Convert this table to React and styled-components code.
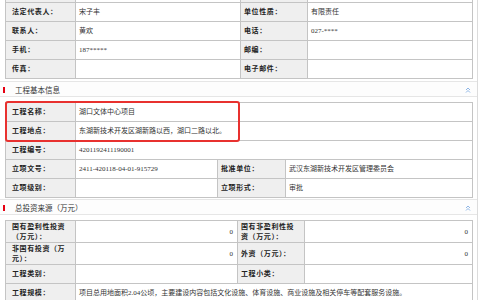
import React from 'react'
import styled, { createGlobalStyle } from 'styled-components'

const GlobalStyle = createGlobalStyle`
  html, body {
    margin: 0;
    padding: 0;
    background: #fff;
    overflow: hidden;
  }
  body {
    font-family: "Liberation Serif", "Noto Sans CJK SC", serif;
    color: #333;
  }
`

// column widths of each form table (label | value | label | value)
const companyCols = '70px 165px 67px 165px'
const projectCols = '70px 142px 68px 187px'
const fundCols = '70px 162px 67px 168px'

// first row sits above the window, only its bottom edge shows
const ownerRows = [
  ['', '', '', ''],
  ['法定代表人：', '宋子丰', '单位性质：', '有限责任'],
  ['联系人：', '黄欢', '电话：', '027-****'],
  ['手机：', '187*****', '邮编：', ''],
  ['传真：', '', '电子邮件：', ''],
]

const Panel = styled.div`
  width: 477px;
  height: 317px;
  margin-top: -17px;
  border-right: 1px solid #dcdcdc;
  overflow: hidden;
`

const Grid = styled.div`
  position: relative;
  display: grid;
  grid-template-columns: ${(p) => p.$cols};
  width: 468px;
  margin-left: 5px;
  border-top: 1px solid #c4c4c4;
  border-left: 1px solid #c4c4c4;
  box-sizing: border-box;
`

const Cell = styled.div`
  display: flex;
  align-items: center;
  justify-content: ${(p) => (p.$num ? 'flex-end' : 'flex-start')};
  min-height: 18px;
  padding: ${(p) => (p.$tall ? '1px' : '0')} 4px 0 ${(p) => (p.$inset ? '6px' : '3px')};
  border-right: 1px solid #c4c4c4;
  border-bottom: 1px solid #c4c4c4;
  grid-column: ${(p) => (p.$span ? `span ${p.$span}` : 'auto')};
  font-size: 7px;
  line-height: 10px;
  white-space: ${(p) => (p.$tall ? 'normal' : 'nowrap')};
`

const Label = styled(Cell)`
  background: #efefef;
  color: #222;
  font-weight: 700;
  letter-spacing: 0.6px;
  padding-right: ${(p) => (p.$tall ? '9px' : '4px')};
`

const Value = styled(Cell)`
  background: #fff;
  color: #333;
`

const SectionHead = styled.div`
  display: flex;
  align-items: center;
  height: 14px;
  margin: ${(p) => p.$gap || '2px'} 0 5px;
  padding: 0 6px 0 3px;
  border-top: 1px solid #e6e6e6;
  border-bottom: 1px solid #e6e6e6;
  background: #fdfdfd;
  font-size: 7.5px;
  color: #333;
`

const Marker = styled.span`
  width: 2px;
  height: 6px;
  margin: 2px 10px 0 0;
  background: #e60012;
`

const HeadTitle = styled.span`
  flex: 1;
  padding-top: 1px;
`

const Collapse = styled.svg`
  width: 6px;
  height: 6px;
  margin-top: 1px;
`

const Highlight = styled.div`
  position: absolute;
  top: -2px;
  left: -1px;
  width: 235px;
  height: 41px;
  border: 2px solid #e8312f;
  border-radius: 3px;
  box-sizing: border-box;
  pointer-events: none;
`

const UpIcon = () => (
  <Collapse viewBox="0 0 6 6">
    <path d="M1 3 L3 1 L5 3 M1 5.5 L3 3.5 L5 5.5" fill="none" stroke="#8fb6e6" strokeWidth="1" />
  </Collapse>
)

const Section = ({ title, gap }) => (
  <SectionHead $gap={gap}>
    <Marker />
    <HeadTitle>{title}</HeadTitle>
    <UpIcon />
  </SectionHead>
)

const App = () => {
  return (
    <>
      <GlobalStyle />
      <Panel>
        <Grid $cols={companyCols}>
          {ownerRows.map((row, i) => (
            <React.Fragment key={i}>
              <Label $inset>{row[0]}</Label>
              <Value>{row[1]}</Value>
              <Label>{row[2]}</Label>
              <Value>{row[3]}</Value>
            </React.Fragment>
          ))}
        </Grid>

        <Section title="工程基本信息" />

        <Grid $cols={projectCols}>
          <Label $inset>工程名称：</Label>
          <Value $span={3}>湖口文体中心项目</Value>
          <Label $inset>工程地点：</Label>
          <Value $span={3}>东湖新技术开发区湖新路以西，湖口二路以北。</Value>
          <Label $inset>工程编号：</Label>
          <Value $span={3}>4201192411190001</Value>
          <Label $inset>立项文号：</Label>
          <Value>2411-420118-04-01-915729</Value>
          <Label>批准单位：</Label>
          <Value>武汉东湖新技术开发区管理委员会</Value>
          <Label $inset>立项级别：</Label>
          <Value></Value>
          <Label>立项形式：</Label>
          <Value>审批</Value>
          <Highlight />
        </Grid>

        <Section title="总投资来源（万元）" gap="1px" />

        <Grid $cols={fundCols}>
          <Label $inset $tall>国有盈利性投资（万元）：</Label>
          <Value $num>0</Value>
          <Label $tall>国有非盈利性投资（万元）：</Label>
          <Value $num>0</Value>
          <Label $inset $tall>非国有投资（万元）：</Label>
          <Value $num>0</Value>
          <Label>外资（万元）：</Label>
          <Value $num>0</Value>
          <Label $inset>工程类别：</Label>
          <Value></Value>
          <Label>工程小类：</Label>
          <Value></Value>
          <Label $inset>工程规模：</Label>
          <Value $span={3}>
            项目总用地面积2.04公顷，主要建设内容包括文化设施、体育设施、商业设施及相关停车等配套服务设施。
          </Value>
        </Grid>
      </Panel>
    </>
  )
}

export default App
